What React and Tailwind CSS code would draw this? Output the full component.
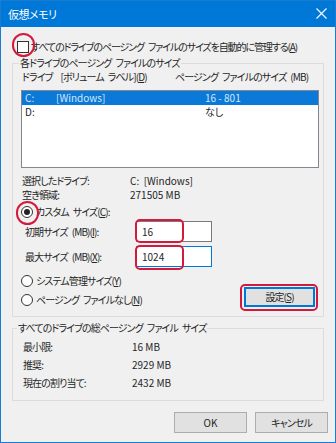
const Radio = ({ checked }) => (
  <span className="w-[12px] h-[12px] rounded-full border border-[#333333] bg-white flex items-center justify-center shrink-0">
    {checked && <span className="w-[6px] h-[6px] rounded-full bg-[#222222]" />}
  </span>
);

const Sp = () => <span className="inline-block w-[4px]" />;

export default function App() {
  return (
    <div className="w-[336px] h-[443px] border border-[#1a7bd3] bg-[#f0f0f0] flex flex-col relative text-[10px] leading-[14px] tracking-[-0.9px] text-[#262626] font-['Noto_Sans_CJK_JP','Noto_Sans',sans-serif] [font-feature-settings:'palt'] overflow-hidden">
      {/* title bar */}
      <div className="h-[27px] -mt-px -mx-px bg-[#0078d7] flex items-center justify-between pl-[8px] pr-[9px] text-white text-[11px] tracking-[-0.5px] shrink-0">
        <span>仮想メモリ</span>
        <svg width="11" height="11" viewBox="0 0 11 11">
          <path d="M0.5 0.5 L10.5 10.5 M10.5 0.5 L0.5 10.5" stroke="white" strokeWidth="1.1" />
        </svg>
      </div>

      {/* auto manage checkbox */}
      <div className="mt-[13px] h-[14px] flex items-center ml-[16px]">
        <span className="w-[12px] h-[12px] border border-[#333333] bg-white shrink-0" />
        <span className="ml-[2px] whitespace-nowrap tracking-[-1.1px]">
          すべてのドライブのページング<Sp />ファイルのサイズを自動的に管理する(<span className="underline">A</span>)
        </span>
      </div>

      {/* group 1 */}
      <fieldset className="mt-[2px] mx-[11px] h-[261px] border border-[#dcdcdc] p-0 shrink-0">
        <legend className="ml-[6px] px-[1px] leading-[14px]">各ドライブのページング<Sp />ファイルのサイズ</legend>
        <div className="h-[14px] flex pl-[9px] whitespace-nowrap">
          <span className="w-[153px]">
            ドライブ<Sp /><Sp />[ボリューム<Sp />ラベル](<span className="underline">D</span>)
          </span>
          <span>ページング<Sp />ファイルのサイズ<Sp />(MB)</span>
        </div>
        <div className="mt-[6px] ml-[8px] w-[298px] h-[78px] border border-[#828790] bg-white tracking-normal">
          <div className="h-[14px] leading-[14px] bg-[#0a79d7] text-[#d6e6f7] flex pl-[3px]">
            <span className="w-[31px]">C:</span>
            <span className="w-[149px]">[Windows]</span>
            <span>16 - 801</span>
          </div>
          <div className="h-[14px] leading-[14px] flex pl-[3px]">
            <span className="w-[180px]">D:</span>
            <span>なし</span>
          </div>
        </div>
        <div className="mt-[6px] pl-[9px] flex h-[14px]">
          <span className="w-[108px]">選択したドライブ:</span>
          <span className="tracking-normal">C:&nbsp; [Windows]</span>
        </div>
        <div className="pl-[9px] flex h-[14px]">
          <span className="w-[108px]">空き領域:</span>
          <span className="tracking-normal">271505 MB</span>
        </div>
        <div className="mt-[3px] pl-[8px] flex items-center h-[14px]">
          <Radio checked />
          <span className="ml-[3px]">
            カスタム<Sp />サイズ(<span className="underline">C</span>):
          </span>
        </div>
        <div className="mt-[2px] pl-[12px] flex items-center h-[21px]">
          <span className="w-[111px]">
            初期サイズ<Sp />(MB)(<span className="underline">I</span>):
          </span>
          <span className="w-[76px] h-[21px] border border-[#7a7a7a] bg-white pl-[5px] flex items-center tracking-normal">16</span>
        </div>
        <div className="mt-[4px] pl-[12px] flex items-center h-[21px]">
          <span className="w-[111px]">
            最大サイズ<Sp />(MB)(<span className="underline">X</span>):
          </span>
          <span className="w-[76px] h-[21px] border border-[#0078d7] bg-white pl-[5px] flex items-center tracking-normal">1024</span>
        </div>
        <div className="mt-[7px] flex items-end justify-between">
          <div className="flex flex-col pl-[8px]">
            <div className="flex items-center h-[14px]">
              <Radio />
              <span className="ml-[3px]">
                システム管理サイズ(<span className="underline">Y</span>)
              </span>
            </div>
            <div className="mt-[5px] flex items-center h-[14px]">
              <Radio />
              <span className="ml-[3px]">
                ページング<Sp />ファイルなし(<span className="underline">N</span>)
              </span>
            </div>
          </div>
          <div className="mr-[8px] w-[71px] h-[20px] bg-[#e1e1e1] border border-[#0078d7] shadow-[inset_0_0_0_1px_#0078d7] flex items-center justify-center">
            設定(<span className="underline">S</span>)
          </div>
        </div>
      </fieldset>

      {/* group 2 */}
      <fieldset className="mt-[4px] mx-[11px] h-[80px] border border-[#dcdcdc] p-0 shrink-0">
        <legend className="ml-[4px] px-[1px] leading-[14px]">すべてのドライブの総ページング<Sp />ファイル<Sp />サイズ</legend>
        <div className="mt-[5px] pl-[10px] flex h-[14px]">
          <span className="w-[109px]">最小限:</span>
          <span className="tracking-normal">16 MB</span>
        </div>
        <div className="mt-[4px] pl-[10px] flex h-[14px]">
          <span className="w-[109px]">推奨:</span>
          <span className="tracking-normal">2929 MB</span>
        </div>
        <div className="mt-[4px] pl-[10px] flex h-[14px]">
          <span className="w-[109px]">現在の割り当て:</span>
          <span className="tracking-normal">2432 MB</span>
        </div>
      </fieldset>

      {/* buttons */}
      <div className="mt-[11px] flex justify-end gap-[8px] mr-[7px]">
        <div className="w-[73px] h-[21px] bg-[#e1e1e1] border border-[#adadad] flex items-center justify-center tracking-normal">OK</div>
        <div className="w-[73px] h-[21px] bg-[#e1e1e1] border border-[#adadad] flex items-center justify-center">キャンセル</div>
      </div>

      {/* red annotation marks */}
      <div className="absolute left-[11px] top-[32px] w-[23px] h-[24px] rounded-full border-2 border-[#d41a3c]" />
      <div className="absolute left-[15px] top-[200px] w-[23px] h-[24px] rounded-full border-2 border-[#d41a3c]" />
      <div className="absolute left-[134px] top-[218px] w-[49px] h-[24px] rounded-[5px] border-2 border-[#d41a3c]" />
      <div className="absolute left-[134px] top-[244px] w-[49px] h-[25px] rounded-[5px] border-2 border-[#d41a3c]" />
      <div className="absolute left-[239px] top-[283px] w-[78px] h-[27px] rounded-[5px] border-2 border-[#d41a3c]" />
    </div>
  );
}
